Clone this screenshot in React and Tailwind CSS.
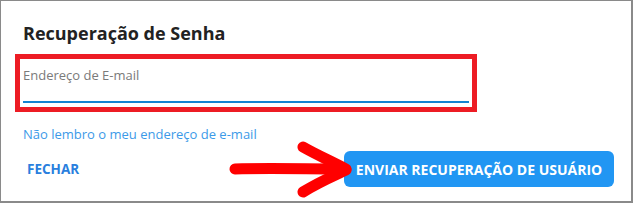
import React from 'react';

const RedArrow = () => (
  <svg
    className="absolute left-[226px] top-[140px] pointer-events-none"
    width="130"
    height="58"
    viewBox="0 0 130 58"
  >
    <g fill="none" stroke="#ff0000" strokeLinecap="round" strokeLinejoin="round">
      <path d="M8 28 C40 27 80 28 116 28" strokeWidth="11" />
      <path d="M76 6 C90 14 104 20 119 28" strokeWidth="11" />
      <path d="M76 51 C90 42 104 36 119 29" strokeWidth="11" />
    </g>
  </svg>
);

const App = () => {
  return (
    <div
      className="relative w-[633px] h-[203px] bg-white border border-[#8a8a8a] border-r-2 border-b-2 overflow-hidden"
      style={{ fontFamily: '"Open Sans", "Noto Sans", sans-serif' }}
    >
      <div className="px-[14px] pt-[20px]">
        <h2 className="pl-2 text-[18px] leading-[24px] font-bold text-[#222]">
          Recuperação de Senha
        </h2>

        {/* input highlighted by red annotation box */}
        <div className="mt-[9px] w-[462px] h-[58px] border-[5px] border-[#ed1c24] px-[3px] pt-[3px]">
          <div className="h-[41px] border-b-2 border-[#1383d1]">
            <span className="text-[13px] leading-[18px] text-[#7a7a7a]">Endereço de E-mail</span>
          </div>
        </div>

        <div className="pl-2 mt-[13px] text-[13px] leading-[18px] text-[#3c9ae8]">
          Não lembro o meu endereço de e-mail
        </div>

        <div className="mt-[8px] flex items-center justify-between pr-[3px]">
          <button className="pl-[12px] text-[13.5px] font-bold text-[#2a7fde]">
            FECHAR
          </button>
          <button className="h-[36px] w-[270px] rounded-[6px] bg-[#2196f3] text-white text-[14px] font-bold">
            ENVIAR RECUPERAÇÃO DE USUÁRIO
          </button>
        </div>
      </div>

      <RedArrow />
    </div>
  );
};

export default App;
